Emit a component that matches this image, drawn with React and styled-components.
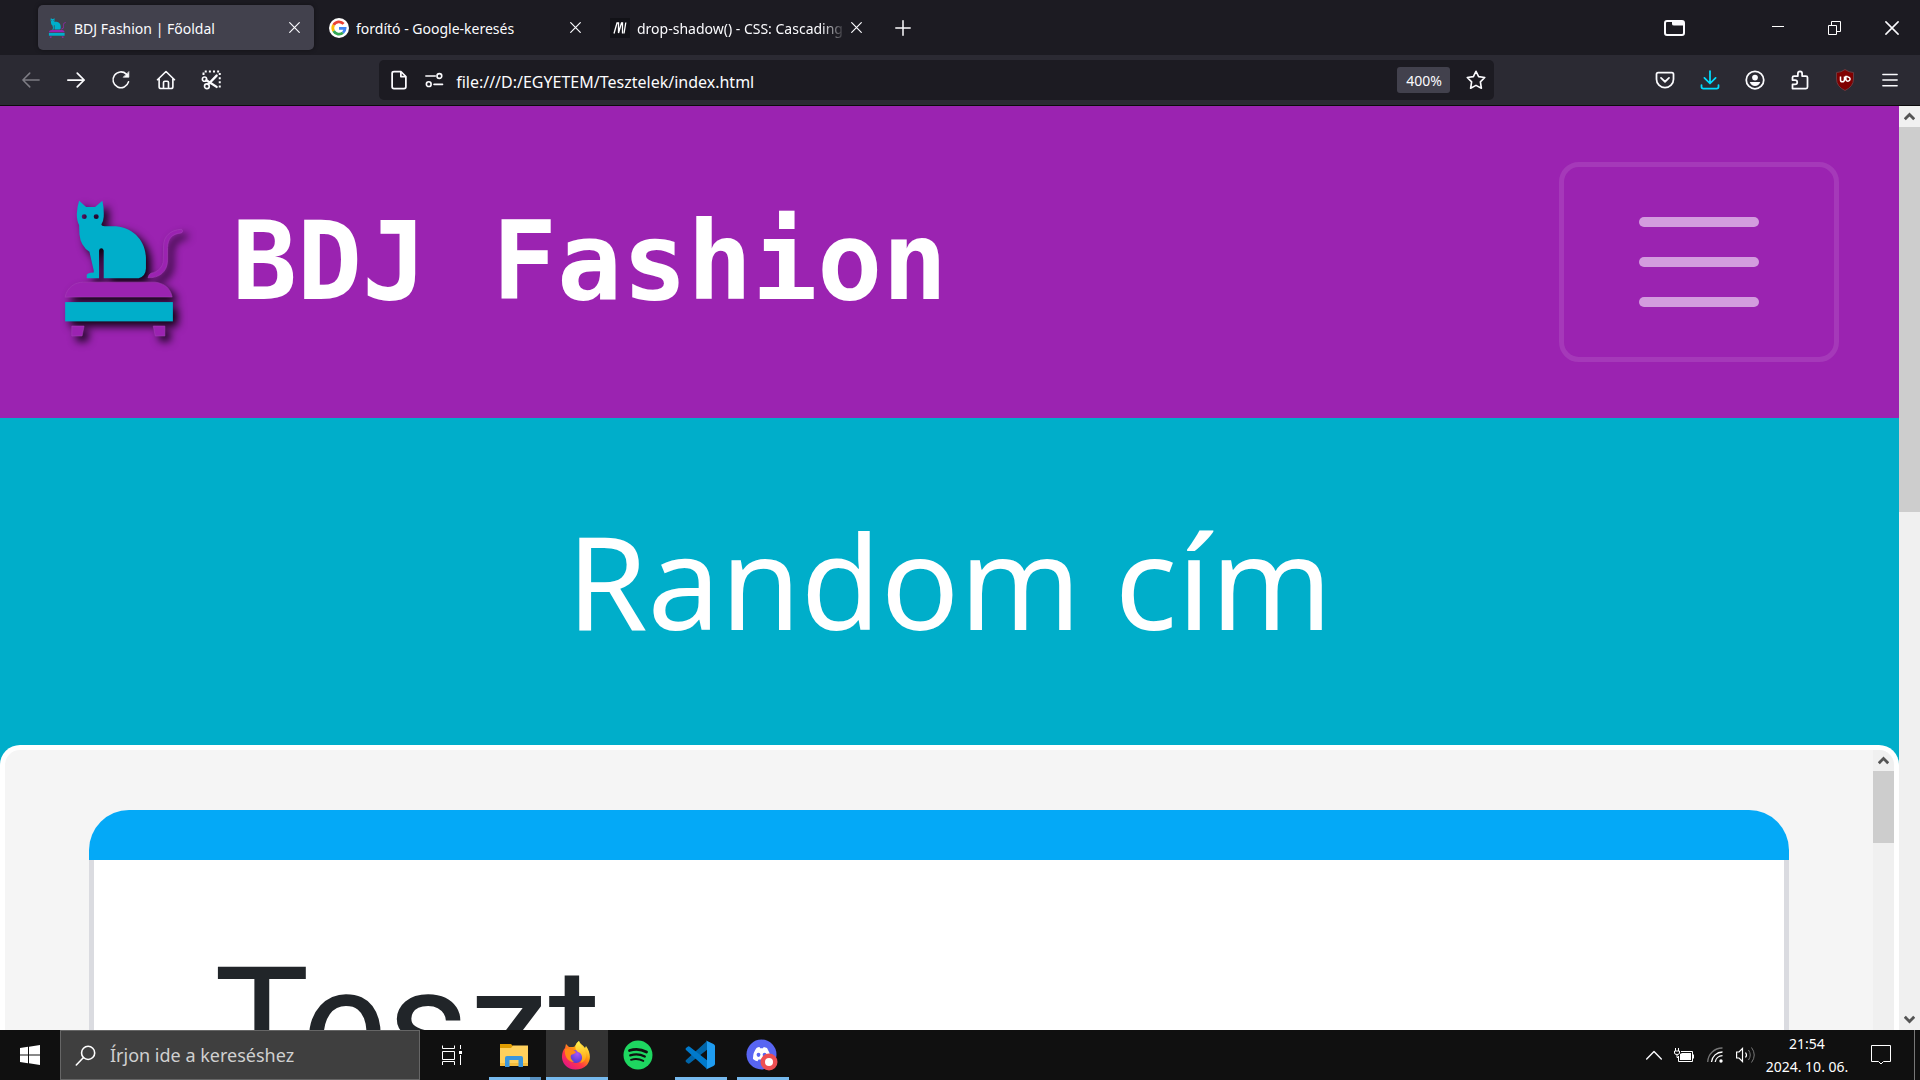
import React from "react";
import styled, { createGlobalStyle, css } from "styled-components";

const PURPLE = "#9b23b1";
const TEAL = "#00aeca";

const Global = createGlobalStyle`
  * { box-sizing: border-box; }
  body { margin: 0; font-family: "Noto Sans", "Open Sans", sans-serif; background: #1c1b22; }
  button { border: 0; padding: 0; margin: 0; background: none; color: inherit; font: inherit; }
  input { border: 0; padding: 0; margin: 0; background: none; color: inherit; font: inherit; outline: 0; }
  h1, h2 { margin: 0; font-weight: 400; }
  svg { display: block; flex: none; }
`;

const Desktop = styled.div`
  display: flex;
  flex-direction: column;
  height: 100vh;
  overflow: hidden;
`;

/* ---------- browser chrome ---------- */

const TabBar = styled.header`
  display: flex;
  align-items: center;
  height: 55px;
  flex: none;
  padding-left: 38px;
  background: #1c1b22;
  color: #fbfbfe;
  font-size: 14px;
`;

const TabList = styled.div`
  display: flex;
  gap: 5px;
`;

const Tab = styled.div`
  display: flex;
  align-items: center;
  width: 276px;
  height: 45px;
  padding: 0 10px;
  border-radius: 5px;
  background: ${(p) => (p.$active ? "#42414d" : "transparent")};
  box-shadow: ${(p) => (p.$active ? "0 0 4px rgba(0, 0, 0, 0.4)" : "none")};
`;

const TabTitle = styled.button`
  display: flex;
  align-items: center;
  gap: 7px;
  flex: 1;
  min-width: 0;
  text-align: left;
`;

const TabText = styled.span`
  flex: 1;
  padding-top: 2px;
  overflow: hidden;
  white-space: nowrap;
  ${(p) =>
    p.$fade &&
    css`
      mask-image: linear-gradient(to right, #000 88%, transparent);
    `}
`;

const IconButton = styled.button`
  display: flex;
  align-items: center;
  justify-content: center;
  width: ${(p) => p.$w || 45}px;
  height: ${(p) => p.$h || 40}px;
  flex: none;
  color: ${(p) => p.$color || "#fbfbfe"};
`;

const Spacer = styled.div`
  flex: 1;
`;

const WindowControls = styled.div`
  display: flex;
  padding-left: 52px;
`;

const Toolbar = styled.nav`
  display: flex;
  align-items: center;
  height: 51px;
  flex: none;
  padding: 0 8px;
  background: #2b2a33;
  border-bottom: 1px solid #0c0c0d;
  color: #fbfbfe;
`;

const ToolGroup = styled.div`
  display: flex;
  flex: ${(p) => p.$grow} 1 0;
  justify-content: ${(p) => p.$align || "flex-start"};
`;

const UrlBar = styled.div`
  display: flex;
  align-items: center;
  flex: 24 1 0;
  height: 40px;
  padding: 0 0 0 2px;
  border-radius: 5px;
  background: #1c1b22;
`;

const UrlInput = styled.input`
  flex: 1;
  min-width: 0;
  margin-left: 5px;
  padding-top: 3px;
  font-size: 16px;
`;

const ZoomBadge = styled.button`
  width: 53px;
  height: 26px;
  margin-right: 8px;
  border-radius: 3px;
  background: #42414d;
  font-size: 14px;
`;

/* ---------- scroll bars ---------- */

const Track = styled.div`
  display: flex;
  flex-direction: column;
  width: 21px;
  flex: none;
  background: #f0f0f0;
`;

const ScrollButton = styled.button`
  display: flex;
  align-items: center;
  justify-content: center;
  height: 21px;
  flex: none;
`;

const Thumb = styled.div`
  height: ${(p) => p.$size}px;
  background: #cdcdcd;
`;

/* ---------- web page ---------- */

const Viewport = styled.div`
  display: flex;
  flex: 1;
  min-height: 0;
  overflow: hidden;
`;

const Page = styled.main`
  display: flex;
  flex-direction: column;
  flex: 1;
  min-width: 0;
  overflow: hidden;
  background: ${TEAL};
`;

const Navbar = styled.div`
  display: flex;
  align-items: center;
  justify-content: space-between;
  flex: none;
  padding: 56px 60px 56px 64px;
  background: ${PURPLE};
`;

const Brand = styled.a`
  display: flex;
  align-items: center;
  gap: 48px;
  color: #fff;
  text-decoration: none;
  white-space: nowrap;
  font: 700 108px/160px "DejaVu Sans Mono", monospace;
`;

const BrandLogo = styled.span`
  margin-top: 12px;
  filter: drop-shadow(5px 5px 4px rgba(0, 0, 0, 0.9));
`;

const Toggler = styled.button`
  display: flex;
  flex-direction: column;
  align-items: center;
  justify-content: center;
  gap: 30px;
  width: 280px;
  height: 200px;
  border: 5px solid rgba(255, 255, 255, 0.1);
  border-radius: 20px;
`;

const TogglerLine = styled.span`
  width: 120px;
  height: 10px;
  border-radius: 5px;
  background: #d39cde;
`;

const Hero = styled.h1`
  flex: none;
  padding: 86px 0 89px;
  text-align: center;
  color: #fff;
  font-size: 130px;
  line-height: 152px;
`;

const Panel = styled.section`
  display: flex;
  flex: 1;
  min-height: 0;
  overflow: hidden;
  border: 5px solid #fff;
  border-bottom: 0;
  border-radius: 20px 20px 0 0;
  background: #f5f5f5;
`;

const PanelBody = styled.div`
  flex: 1;
  padding: 60px 84px 0;
`;

const Card = styled.article`
  border-radius: 40px 40px 0 0;
  overflow: hidden;
`;

const CardTop = styled.div`
  height: 50px;
  background: #04a9f7;
`;

const CardBody = styled.div`
  padding: 70px 120px;
  border: solid #dadbe0;
  border-width: 0 5px;
  background: #fff;
`;

const CardTitle = styled.h2`
  color: #212529;
  font-family: Roboto, sans-serif;
  font-size: 160px;
  line-height: 192px;
`;

/* ---------- task bar ---------- */

const Taskbar = styled.footer`
  display: flex;
  align-items: stretch;
  height: 50px;
  flex: none;
  background: #101010;
  color: #fff;
`;

const SearchBox = styled.label`
  display: flex;
  align-items: center;
  gap: 14px;
  width: 360px;
  padding-left: 14px;
  border: 1px solid #666;
  background: #3f3f3f;
  font-size: 18px;

  input {
    flex: 1;
    min-width: 0;
  }
  input::placeholder {
    color: #d0d0d0;
    opacity: 1;
  }
`;

const Apps = styled.div`
  display: flex;
`;

const AppButton = styled.button`
  display: flex;
  flex-direction: column;
  align-items: center;
  width: 62px;
  padding: ${(p) => (p.$active ? "0" : "0 5px")};
`;

const AppFace = styled.span`
  display: flex;
  flex: 1;
  width: 100%;
  padding: 3px 2px 0 0;
  align-items: center;
  justify-content: center;
  background: ${(p) => (p.$active ? "#333" : "transparent")};
`;

const RunLine = styled.span`
  width: 100%;
  height: 3px;
  background: ${(p) =>
    p.$stacked
      ? "linear-gradient(to right, #76b9ed 79%, #5890bf 79%)"
      : p.$on
      ? "#76b9ed"
      : "transparent"};
`;

const Tray = styled.div`
  display: flex;
  align-items: center;
  padding-right: 5px;
`;

const Clock = styled.time`
  width: 92px;
  text-align: center;
  font-size: 14px;
  line-height: 23px;
`;

const ShowDesktop = styled.button`
  width: 1px;
  height: 50px;
  margin-left: 5px;
  background: #777;
`;

/* ---------- icons ---------- */

const Stroke = ({ s = 20, v = 16, w = 1.2, children, ...rest }) => (
  <svg
    width={s}
    height={s}
    viewBox={`0 0 ${v} ${v}`}
    fill="none"
    stroke="currentColor"
    strokeWidth={w}
    strokeLinecap="round"
    strokeLinejoin="round"
    aria-hidden="true"
    {...rest}
  >
    {children}
  </svg>
);

const CatLogo = ({ width, height }) => (
  <svg width={width} height={height} viewBox="72 62 360 412" aria-hidden="true">
    <path
      fillRule="evenodd"
      fill={TEAL}
      d="M117 64 L138 83 L165 83 L187 64 Q192 84 191 112 Q190 127 184 135 Q184 141 194 141 L228 141 C285 146 317 190 318 235 L318 268 Q317 292 296 297 L191 297 L191 214 Q189 207 184 207 Q178 207 177 214 L177 297 L140 297 L140 287 Q142 281 161 280 L161 274 L148 218 Q121 200 118 165 L117 137 Q110 125 110 105 Q111 82 117 64Z M125 112a7.500 7.500 0 1 0 15 0a7.500 7.500 0 1 0 -15 0Z M161 112a7.500 7.500 0 1 0 15 0a7.500 7.500 0 1 0 -15 0Z"
    />
    <g fill={PURPLE} stroke="#a744bb" strokeWidth="1.500">
      <path d="M425 150 C390 152 371 172 371 200 L370 243 C370 262 355 279 333 282 Q326 286 324 296 C358 297 382 278 383 245 L383 205 C384 178 395 164 425 161 Q432 155 425 150Z" />
      <path d="M75 354 C80 325 105 309 130 309 L345 309 C375 312 393 330 397 354Z" />
      <path d="M95 441 H132 L126 471 H95Z M340 441 H375 V471 H346Z" />
    </g>
    <rect x="75" y="369" width="324" height="58" fill={TEAL} />
  </svg>
);

const GoogleIcon = () => (
  <svg width="20" height="20" viewBox="0 0 20 20" aria-hidden="true">
    <circle cx="10" cy="10" r="10" fill="#fff" />
    <g fill="none" strokeWidth="2.800">
      <path d="M14.600 5.900 A6.200 6.200 0 0 0 4.600 7" stroke="#ea4335" />
      <path d="M4.600 7 A6.200 6.200 0 0 0 4.600 13" stroke="#fbbc05" />
      <path d="M4.600 13 A6.200 6.200 0 0 0 14 14.700" stroke="#34a853" />
      <path d="M14 14.700 A6 6 0 0 0 16.100 10.300 H10" stroke="#4285f4" />
    </g>
  </svg>
);

const MdnIcon = () => (
  <svg width="20" height="20" viewBox="0 0 20 20" aria-hidden="true">
    <rect width="20" height="20" fill="#121217" />
    <path
      d="M4 15.500 L7 5 H8.500 V15 L11.500 5 H12.500 V15.500 M15.800 4.500 L14 15.500"
      fill="none"
      stroke="#fff"
      strokeWidth="1.300"
    />
  </svg>
);

const CrossIcon = ({ s = 11 }) => (
  <Stroke s={s} v={11} w={1.2}>
    <path d="M.7 .7 10.300 10.300 M10.300 .7 .7 10.300" />
  </Stroke>
);

const Chevron = ({ down }) => (
  <svg width="11" height="9" viewBox="0 0 11 9" aria-hidden="true">
    <path
      d={down ? "M.8 1.800 L5.500 6.500 L10.200 1.800" : "M.8 7.200 L5.500 2.500 L10.200 7.200"}
      fill="none"
      stroke="#555"
      strokeWidth="2.800"
    />
  </svg>
);

const FolderIcon = () => (
  <svg width="28" height="24" viewBox="0 0 28 24" aria-hidden="true">
    <path d="M0 1 H11 L13 3 V6 H0Z" fill="#e09c00" />
    <path d="M0 5 H11 L13 2.500 H28 V23 H0Z" fill="#ffd05c" />
    <path d="M0 20 H28 V23 H0Z" fill="#f5bd3c" />
    <path d="M5 24 V15 Q5 13 7 13 H21 Q23 13 23 15 V24 H18.500 V17 H9.500 V24Z" fill="#3a96dd" />
  </svg>
);

const FirefoxIcon = () => (
  <svg width="30" height="30" viewBox="0 0 30 30" aria-hidden="true">
    <defs>
      <linearGradient id="fxBody" x1="0.85" y1="0.1" x2="0.2" y2="0.95">
        <stop offset="0" stopColor="#fff44f" />
        <stop offset="0.35" stopColor="#ff980e" />
        <stop offset="0.65" stopColor="#ff3647" />
        <stop offset="1" stopColor="#e31587" />
      </linearGradient>
      <radialGradient id="fxGlobe" cx="0.6" cy="0.3" r="0.8">
        <stop offset="0" stopColor="#a855f7" />
        <stop offset="1" stopColor="#4338ca" />
      </radialGradient>
      <linearGradient id="fxFlame" x1="0.5" y1="0" x2="0.5" y2="1">
        <stop offset="0" stopColor="#fff44f" />
        <stop offset="1" stopColor="#ff980e" />
      </linearGradient>
    </defs>
    <path
      d="M18 1 C19 4 22 5 24 8 L25 6 C30 13 30 20 26 25 C20 31 9 31 4 25 C-1 19 1 11 4 8 L5 4 L8 7 C11 7 14 7 14 6 Q15 3 18 1Z"
      fill="url(#fxBody)"
    />
    <circle cx="15" cy="16.500" r="6.500" fill="url(#fxGlobe)" />
    <path d="M18 1 C18 5 24 7 25 14 C26 19 22 23 19 23 C23 19 21 13 17 12 C13 9 14 4 18 1Z" fill="url(#fxFlame)" />
    <path d="M4 9 C7 7 11 9 15 12 C14 14 11 14 10 15 C9 17 10 20 13 22 C6 22 3 15 4 9Z" fill="#ff8a16" />
  </svg>
);

const SpotifyIcon = () => (
  <svg width="30" height="30" viewBox="0 0 30 30" aria-hidden="true">
    <circle cx="15" cy="15" r="14.500" fill="#1ed760" />
    <g fill="none" stroke="#101010" strokeLinecap="round">
      <path d="M6.500 10.500 Q15.500 7.500 23.500 12" strokeWidth="2.800" />
      <path d="M7.300 15.300 Q15 12.900 21.800 16.500" strokeWidth="2.300" />
      <path d="M8 19.800 Q14.500 17.900 20.300 20.900" strokeWidth="1.900" />
    </g>
  </svg>
);

const CodeIcon = () => (
  <svg width="30" height="30" viewBox="0 0 30 30" aria-hidden="true">
    <path d="M22 1 L1 20 Q0 21 1 22 L3 23.500 Q4 24 5 23 L23 9Z" fill="#0065a9" />
    <path d="M22 29 L1 10 Q0 9 1 8 L3 6.500 Q4 6 5 7 L23 21Z" fill="#007acc" />
    <path d="M21 .5 L28.500 4 Q30 5 30 6 V24 Q30 25 28.500 26 L21 29.500 Q22 29 22 27 V3 Q22 1 21 .5Z" fill="#1f9cf0" />
  </svg>
);

const DiscordIcon = () => (
  <svg width="32" height="32" viewBox="0 0 32 32" aria-hidden="true">
    <circle cx="15.500" cy="15.500" r="15" fill="#5865f2" />
    <path
      d="M10.500 9 Q12 8.200 13.500 8 L14.200 9.300 H17 L17.700 8 Q19.500 8.300 21 9 Q24.500 14 24 20 Q22 21.800 19.500 22.300 L18.500 20.500 H12.500 L11.500 22.300 Q9 21.800 7 20 Q6.700 14 10.500 9Z"
      fill="#fff"
    />
    <ellipse cx="12.500" cy="15.800" rx="1.900" ry="2.100" fill="#5865f2" />
    <ellipse cx="18.600" cy="15.800" rx="1.900" ry="2.100" fill="#5865f2" />
    <circle cx="23" cy="23" r="8.500" fill="#ed4f53" />
    <circle cx="23" cy="23" r="4" fill="#fff" />
  </svg>
);

/* ---------- pieces ---------- */

const Scrollbar = ({ size, bottom }) => (
  <Track>
    <ScrollButton aria-label="Fel">
      <Chevron />
    </ScrollButton>
    <Thumb $size={size} />
    <Spacer />
    {bottom && (
      <ScrollButton aria-label="Le">
        <Chevron down />
      </ScrollButton>
    )}
  </Track>
);

const tabs = [
  { title: "BDJ Fashion | Főoldal", icon: <CatLogo width={19} height={20} />, active: true },
  { title: "fordító - Google-keresés", icon: <GoogleIcon /> },
  { title: "drop-shadow() - CSS: Cascading", icon: <MdnIcon />, fade: true },
];

const apps = [
  { name: "Fájlkezelő", icon: <FolderIcon />, on: true, stacked: true },
  { name: "Firefox", icon: <FirefoxIcon />, on: true, active: true },
  { name: "Spotify", icon: <SpotifyIcon /> },
  { name: "Visual Studio Code", icon: <CodeIcon />, on: true },
  { name: "Discord", icon: <DiscordIcon />, on: true },
];

export default function App() {
  return (
    <Desktop>
      <Global />
      <TabBar>
        <TabList>
          {tabs.map((t) => (
            <Tab key={t.title} $active={t.active}>
              <TabTitle>
                {t.icon}
                <TabText $fade={t.fade}>{t.title}</TabText>
              </TabTitle>
              <IconButton $w={20} $h={20} aria-label="Lap bezárása">
                <CrossIcon />
              </IconButton>
            </Tab>
          ))}
        </TabList>
        <IconButton $w={54} aria-label="Új lap">
          <Stroke s={16} w={1.5}>
            <path d="M8 .8V15.200M.8 8H15.200" />
          </Stroke>
        </IconButton>
        <Spacer />
        <IconButton aria-label="Firefox View">
          <svg width="21" height="16" viewBox="0 0 21 16" aria-hidden="true">
            <rect x="1" y="1" width="19" height="14" rx="2" fill="none" stroke="#fbfbfe" strokeWidth="2" />
            <path d="M8 1H19V5.500H10Q8 5.500 8 4Z" fill="#fbfbfe" />
          </svg>
        </IconButton>
        <WindowControls>
          <IconButton $w={57} aria-label="Kis méret">
            <svg width="12" height="3" aria-hidden="true">
              <path d="M0 .5H12" stroke="#fff" />
            </svg>
          </IconButton>
          <IconButton $w={57} aria-label="Előző méret">
            <svg width="13" height="14" fill="none" stroke="#fff" aria-hidden="true">
              <path d="M.5 4.500H8.500V13.500H.5Z M3.500 4.500V.5H12.500V10.500H8.500" />
            </svg>
          </IconButton>
          <IconButton $w={57} aria-label="Bezárás">
            <CrossIcon s={14} />
          </IconButton>
        </WindowControls>
      </TabBar>

      <Toolbar>
        <ToolGroup $grow={8}>
          <IconButton $color="#7d7c84" aria-label="Vissza">
            <Stroke>
              <path d="M1.500 8H14.500M7 2.500L1.500 8L7 13.500" />
            </Stroke>
          </IconButton>
          <IconButton aria-label="Előre">
            <Stroke w={1.4}>
              <path d="M1.500 8H14.500M9 2.500L14.500 8L9 13.500" />
            </Stroke>
          </IconButton>
          <IconButton aria-label="Frissítés">
            <Stroke w={1.3}>
              <path d="M14 9.500A6.300 6.300 0 1 1 12.300 3.300" />
              <path d="M14.300 1.500V5.800H10Z" fill="currentColor" strokeWidth=".5" />
            </Stroke>
          </IconButton>
          <IconButton aria-label="Kezdőlap">
            <Stroke w={1.3}>
              <path d="M1.200 7.800L8 1.200L14.800 7.800M2.500 7V13.300Q2.500 14.800 4 14.800H12Q13.500 14.800 13.500 13.300V7M6 14.800V10Q6 9 7 9H9Q10 9 10 10V14.800" />
            </Stroke>
          </IconButton>
          <IconButton aria-label="Képernyőkép">
            <Stroke w={1.3}>
              <path d="M3 1.200H15V15" strokeDasharray="1.600 1.700" strokeLinecap="butt" strokeWidth="1.600" />
              <path d="M2 2V4" strokeLinecap="butt" strokeWidth="1.600" />
              <circle cx="2.800" cy="7.300" r="1.700" />
              <circle cx="4.700" cy="13" r="1.900" />
              <path d="M4.300 8.200L12.500 13.500M5.800 11.400L12.500 4.500" strokeWidth="1.900" />
            </Stroke>
          </IconButton>
        </ToolGroup>
        <UrlBar>
          <IconButton $w={35} aria-label="Oldalinformációk">
            <Stroke w={1.4}>
              <path d="M4 1.200H9.500L13.500 5.200V13.300Q13.500 14.800 12 14.800H4Q2.500 14.800 2.500 13.300V2.700Q2.500 1.200 4 1.200ZM9.500 1.200V5.200H13.500" />
            </Stroke>
          </IconButton>
          <IconButton $w={35} aria-label="Engedélyek">
            <Stroke w={1.3}>
              <path d="M1.500 4.800H9M8 11.500H14.800" />
              <circle cx="12.300" cy="4.800" r="1.900" />
              <circle cx="3.800" cy="11.300" r="1.900" />
            </Stroke>
          </IconButton>
          <UrlInput aria-label="Cím" defaultValue="file:///D:/EGYETEM/Tesztelek/index.html" />
          <ZoomBadge>400%</ZoomBadge>
          <IconButton $w={36} aria-label="Könyvjelző">
            <Stroke w={1.3}>
              <path d="M8 1L10.100 5.300L15 6L11.500 9.500L12.300 14.600L8 12.300L3.700 14.600L4.500 9.500L1 6L5.900 5.300Z" />
            </Stroke>
          </IconButton>
        </UrlBar>
        <ToolGroup $grow={9} $align="flex-end">
          <IconButton aria-label="Pocket">
            <Stroke w={1.4}>
              <path d="M2.500 2H13.500Q14.800 2 14.800 3.300V7.300A6.800 6.800 0 0 1 1.200 7.300V3.300Q1.200 2 2.500 2ZM4.800 6.300L8 9.400L11.200 6.300" />
            </Stroke>
          </IconButton>
          <IconButton $color="#00ddff" aria-label="Letöltések">
            <Stroke w={1.4}>
              <path d="M8 .8V10.500M3.500 6.300L8 10.800L12.500 6.300M1.200 12V13.300Q1.200 14.800 2.700 14.800H13.300Q14.800 14.800 14.800 13.300V12" />
            </Stroke>
          </IconButton>
          <IconButton aria-label="Fiók">
            <Stroke w={1.4}>
              <circle cx="8" cy="8" r="7" />
              <circle cx="8" cy="6" r="2.300" fill="currentColor" stroke="none" />
              <path d="M3.800 9.500H12.200Q11 12.800 8 12.800Q5 12.800 3.800 9.500Z" fill="currentColor" stroke="none" />
            </Stroke>
          </IconButton>
          <IconButton aria-label="Kiegészítők">
            <Stroke w={1.4}>
              <path d="M2 14.800V11.500H4Q5.800 11.500 5.800 9.800Q5.800 8 4 8H2V6Q2 4.800 3.200 4.800H6.300V2.900Q6.300 1 8 1Q9.700 1 9.700 2.900V4.800H12.800Q14 4.800 14 6V13.600Q14 14.800 12.800 14.800Z" />
            </Stroke>
          </IconButton>
          <IconButton aria-label="uBlock Origin">
            <svg width="20" height="22" viewBox="0 0 20 22" aria-hidden="true">
              <path d="M10 .5Q14 3.500 18.500 3.500V10Q18.500 17.500 10 21.500Q1.500 17.500 1.500 10V3.500Q6 3.500 10 .5Z" fill="#800000" stroke="#6b3a40" />
              <path
                d="M5.500 7.500V11Q5.500 12.800 7.200 12.800Q9.500 12.800 9.500 10.200V7.500M12.500 7.500H10.900V10.500A2.100 2.100 0 1 0 12.500 8"
                fill="none"
                stroke="#fff"
                strokeWidth="1.500"
              />
            </svg>
          </IconButton>
          <IconButton aria-label="Menü">
            <Stroke w={1.2}>
              <path d="M2.300 3.500H13.700M2.300 8H13.700M2.300 12.500H13.700" />
            </Stroke>
          </IconButton>
        </ToolGroup>
      </Toolbar>

      <Viewport>
        <Page>
          <Navbar>
            <Brand href="#">
              <BrandLogo>
                <CatLogo width={120} height={137} />
              </BrandLogo>
              BDJ Fashion
            </Brand>
            <Toggler aria-label="Navigáció">
              <TogglerLine />
              <TogglerLine />
              <TogglerLine />
            </Toggler>
          </Navbar>
          <Hero>Random cím</Hero>
          <Panel>
            <PanelBody>
              <Card>
                <CardTop />
                <CardBody>
                  <CardTitle>Teszt</CardTitle>
                </CardBody>
              </Card>
            </PanelBody>
            <Scrollbar size={72} />
          </Panel>
        </Page>
        <Scrollbar size={385} bottom />
      </Viewport>

      <Taskbar>
        <IconButton $w={60} $h={50} aria-label="Start">
          <svg width="20" height="20" viewBox="0 0 20 20" fill="#fff" aria-hidden="true">
            <path d="M0 3L8 1.800V9.500H0ZM9 1.700L20 0V9.500H9ZM0 10.500H8V18.200L0 17ZM9 10.500H20V20L9 18.300Z" />
          </svg>
        </IconButton>
        <SearchBox>
          <Stroke s={21} w={1.2}>
            <circle cx="10" cy="6" r="5" />
            <path d="M6.300 9.700L1 15.200" />
          </Stroke>
          <input type="text" aria-label="Keresés" placeholder="Írjon ide a kereséshez" />
        </SearchBox>
        <IconButton $w={64} $h={50} aria-label="Feladatnézet">
          <svg width="20" height="20" fill="none" stroke="#fff" aria-hidden="true">
            <path d="M.5 .5V3.500H12.500V.5M.5 6.500H12.500V14.500H.5ZM.5 20V16.500H12.500V20M18.500 0V4M18.500 10V20" />
            <path d="M17 6H20V9H17Z" fill="#fff" stroke="none" />
          </svg>
        </IconButton>
        <Apps>
          {apps.map((a) => (
            <AppButton key={a.name} aria-label={a.name} $active={a.active}>
              <AppFace $active={a.active}>{a.icon}</AppFace>
              <RunLine $on={a.on} $stacked={a.stacked} />
            </AppButton>
          ))}
        </Apps>
        <Spacer />
        <Tray>
          <IconButton $w={30} aria-label="Rejtett ikonok">
            <Stroke s={16} w={1.4}>
              <path d="M.7 12L8 4.500L15.300 12" />
            </Stroke>
          </IconButton>
          <IconButton $w={30} aria-label="Akkumulátor">
            <svg width="20" height="15" viewBox="0 0 20 15" aria-hidden="true">
              <path d="M4.500 8V13.500H18.500V3.500H7" fill="none" stroke="#fff" />
              <path d="M6 6L8 5H17V12H6Z M19 6.500H20V10.500H19Z" fill="#fff" />
              <path d="M.5 3H5.500V5Q5.500 6.500 3 6.500Q.5 6.500 .5 5ZM1.500 0V3M4.500 0V3M3 6.500V9.500H5" fill="none" stroke="#fff" />
            </svg>
          </IconButton>
          <IconButton $w={32} aria-label="Wi-Fi">
            <svg width="16" height="16" viewBox="0 0 16 16" fill="none" strokeWidth="1.300" aria-hidden="true">
              <path d="M.7 15A14.500 14.500 0 0 1 15.500 1" stroke="#777" />
              <path d="M4.500 15A11 11 0 0 1 15.500 5M8.200 15A7.500 7.500 0 0 1 15.500 8.700" stroke="#fff" />
              <circle cx="14" cy="14" r="1.700" fill="#fff" />
            </svg>
          </IconButton>
          <IconButton $w={30} aria-label="Hangerő">
            <svg width="20" height="18" viewBox="0 0 20 18" fill="none" stroke="#fff" aria-hidden="true">
              <path d="M.6 6H3L6.500 2.500V15.500L3 12H.6Z" strokeWidth="1.200" />
              <path d="M9.500 6.500Q11.500 9 9.500 11.500" strokeWidth="1.200" />
              <path d="M12.500 4Q16 9 12.500 14M15.500 1.500Q21 9 15.500 16.500" stroke="#777" />
            </svg>
          </IconButton>
          <Clock>
            21:54
            <br />
            2024. 10. 06.
          </Clock>
          <IconButton $w={56} aria-label="Értesítések">
            <svg width="20" height="20" fill="none" stroke="#fff" aria-hidden="true">
              <path d="M.5 .5H19.500V16.500H12.500L10 19L7.500 16.500H.5Z" />
            </svg>
          </IconButton>
          <ShowDesktop aria-label="Asztal megjelenítése" />
        </Tray>
      </Taskbar>
    </Desktop>
  );
}
